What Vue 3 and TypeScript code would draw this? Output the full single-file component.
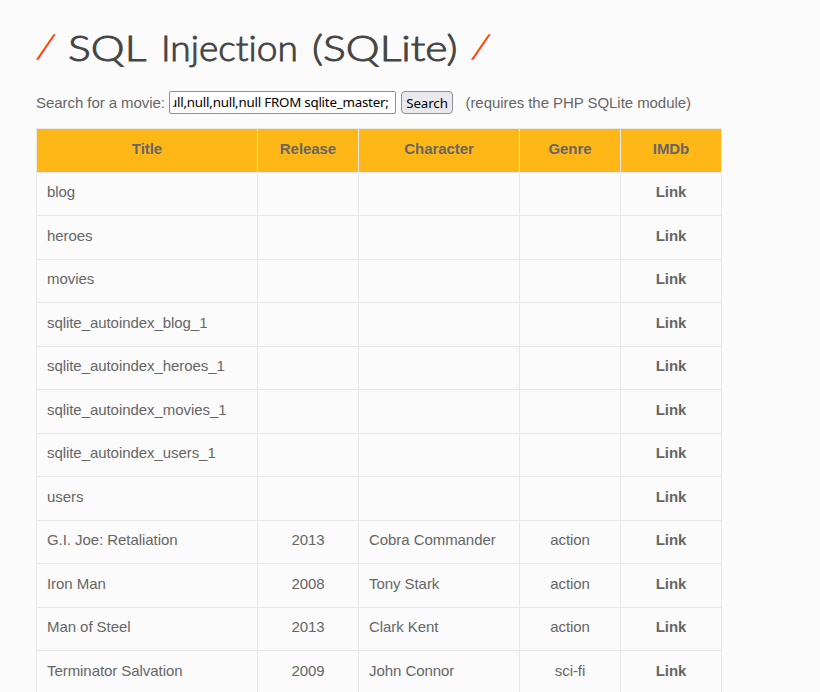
<script setup lang="ts">
import { onMounted, ref } from 'vue'

interface Movie {
  title: string
  release?: string
  character?: string
  genre?: string
}

const columns: string[] = ['Title', 'Release', 'Character', 'Genre', 'IMDb']

const movies: Movie[] = [
  { title: 'blog' },
  { title: 'heroes' },
  { title: 'movies' },
  { title: 'sqlite_autoindex_blog_1' },
  { title: 'sqlite_autoindex_heroes_1' },
  { title: 'sqlite_autoindex_movies_1' },
  { title: 'sqlite_autoindex_users_1' },
  { title: 'users' },
  { title: 'G.I. Joe: Retaliation', release: '2013', character: 'Cobra Commander', genre: 'action' },
  { title: 'Iron Man', release: '2008', character: 'Tony Stark', genre: 'action' },
  { title: 'Man of Steel', release: '2013', character: 'Clark Kent', genre: 'action' },
  { title: 'Terminator Salvation', release: '2009', character: 'John Connor', genre: 'sci-fi' },
]

const query = ref('null,null,null,null FROM sqlite_master;')
const field = ref<HTMLInputElement | null>(null)

// Keep the end of a long query in view.
onMounted(() => {
  if (field.value) field.value.scrollLeft = field.value.scrollWidth
})
</script>

<template>
  <main class="page">
    <h1 class="heading">
      <span class="slash">/</span>
      <span class="word sql">SQL</span>
      <span class="word injection">Injection</span>
      <span class="word sqlite">(SQLite)</span>
      <span class="slash">/</span>
    </h1>

    <form class="search" @submit.prevent>
      <label for="title">Search for a movie:</label>
      <input id="title" ref="field" v-model="query" type="text" spellcheck="false" />
      <button type="submit">Search</button>
      <span class="note">(requires the PHP SQLite module)</span>
    </form>

    <div class="table">
      <div class="row head">
        <div v-for="c in columns" :key="c" class="cell center">{{ c }}</div>
      </div>
      <div v-for="m in movies" :key="m.title" class="row">
        <div class="cell">{{ m.title }}</div>
        <div class="cell center">{{ m.release }}</div>
        <div class="cell">{{ m.character }}</div>
        <div class="cell center">{{ m.genre }}</div>
        <div class="cell center link">Link</div>
      </div>
    </div>
  </main>
</template>

<style>
body {
  background: #fbfbfb;
  overflow: hidden;
}
</style>

<style scoped>
.page {
  box-sizing: border-box;
  height: 692px;
  overflow: hidden;
  padding: 21px 36px 0;
  font: 15px/20px "Liberation Sans", Arial, sans-serif;
  letter-spacing: -0.06px;
  color: #666;
}
.heading {
  display: flex;
  margin: 0;
  height: 52px;
  font: 300 35px/52px Lato, "Liberation Sans", sans-serif;
  font-variant-ligatures: none;
  letter-spacing: 0;
  color: #444;
  white-space: nowrap;
  -webkit-text-stroke: 0.9px currentColor;
}
.word {
  display: block;
  transform-origin: left center;
}
.sql {
  width: 93px;
  transform: scaleX(1.22);
}
.injection {
  width: 151px;
  transform: scaleX(1.06);
}
.sqlite {
  width: 159px;
  transform: scaleX(1.22);
}
.slash {
  width: 32px;
  padding-left: 3px;
  box-sizing: border-box;
  font-size: 32px;
  line-height: 50px;
  color: #ff4200;
  transform: skewX(-15deg);
}
.search {
  display: flex;
  align-items: center;
  height: 23px;
  margin: 18px 0 14px;
  white-space: nowrap;
}
.search label {
  width: 133px;
}
.search input,
.search button {
  box-sizing: border-box;
  height: 23px;
  margin: 0;
  border: 1px solid #8f8f9d;
  color: #000;
  font: 13.333px/19px "Noto Sans", sans-serif;
  letter-spacing: -0.22px;
}
.search input {
  width: 227px;
  padding: 0 6px 1px 3px;
  border-radius: 2px;
  background: #fff;
  outline: none;
}
.search button {
  width: 52px;
  margin-left: 5px;
  padding: 1px 0 0;
  border-radius: 4px;
  background: #e9e9ed;
  letter-spacing: -0.1px;
}
.search label,
.note {
  padding-top: 1px;
}
.note {
  margin-left: 12.5px;
}
.table {
  width: 686px;
  box-sizing: border-box;
  border: 1px solid #e8e8e8;
  border-width: 1px 0 0 1px;
}
.row {
  display: grid;
  grid-template-columns: 221px 101px 161px 101px 101px;
  height: 43.5px;
}
.cell {
  box-sizing: border-box;
  padding: 9.7px 10px 0;
  border: 1px solid #e8e8e8;
  border-width: 0 1px 1px 0;
}
.center {
  text-align: center;
}
.head {
  background: #ffb717;
  font-weight: 700;
}
.head .cell {
  padding-top: 10px;
}
.link {
  font-weight: 700;
}
</style>
